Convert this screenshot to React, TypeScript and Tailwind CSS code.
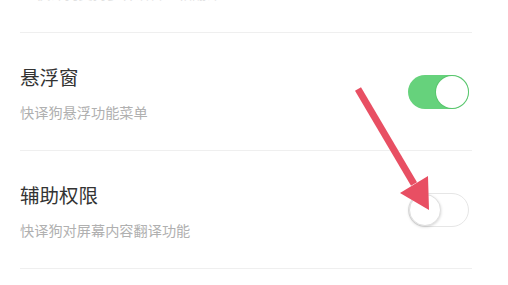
import React from "react";

function Toggle({ on }: { on: boolean }) {
  if (on) {
    return (
      <div className="flex h-[34px] w-[61px] shrink-0 items-center justify-end rounded-full bg-[#66d27c] p-[1px]">
        <div className="h-[32px] w-[32px] rounded-full bg-white shadow-[0_0_0_1px_rgba(80,190,100,0.6)]" />
      </div>
    );
  }
  return (
    <div className="flex h-[34px] w-[61px] shrink-0 items-center justify-start rounded-full border border-[#e6e6e6] bg-white">
      <div className="h-[32px] w-[32px] rounded-full border border-[#e0e0e0] bg-white shadow-[0_1px_3px_rgba(0,0,0,0.18)]" />
    </div>
  );
}

function Row({ title, desc, on }: { title: string; desc: string; on: boolean }) {
  return (
    <div className="flex h-[118px] items-center justify-between border-b border-[#efefef] pr-[3px]">
      <div className="flex flex-col self-start pt-[30px]">
        <div className="text-[19.5px] leading-[28px] text-[#333333]">{title}</div>
        <div className="mt-[11px] text-[14.2px] leading-[20px] text-[#b0b0b0]">{desc}</div>
      </div>
      <Toggle on={on} />
    </div>
  );
}

export default function App() {
  return (
    <div
      className="relative h-[285px] w-[508px] overflow-hidden bg-white"
      style={{ fontFamily: '"Noto Sans CJK SC", "Noto Sans", sans-serif' }}
    >
      <div className="ml-[20px] mr-[36px]">
        <div className="h-[33px] overflow-hidden border-b border-[#efefef]">
          <div className="-mt-[17px] pl-[16px] text-[14.2px] leading-[20px] text-[#e2e2e2]">
            快译狗支持多种语言互相翻译
          </div>
        </div>
        <Row title="悬浮窗" desc="快译狗悬浮功能菜单" on />
        <Row title="辅助权限" desc="快译狗对屏幕内容翻译功能" on={false} />
      </div>

      <svg className="pointer-events-none absolute left-0 top-0" width="508" height="285" viewBox="0 0 508 285">
        <line x1="358" y1="89" x2="414" y2="184" stroke="#e84f63" strokeWidth="7" />
        <polygon points="429,210 400,193 428,176" fill="#e84f63" />
      </svg>
    </div>
  );
}
